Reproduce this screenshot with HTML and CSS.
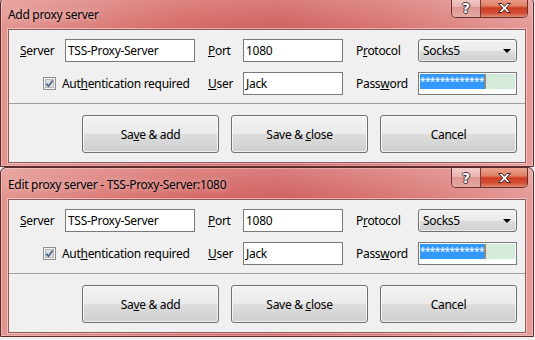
FILE: index.html
```html
<!DOCTYPE html>
<html lang="en">
<head>
  <meta charset="UTF-8">
  <title>Proxy server dialogs</title>
  <link rel="stylesheet" href="styles.css">
</head>
<body>
  <div class="window window-first">
    <div class="titlebar">
      <span class="title">Add proxy server</span>
      <div class="caption-buttons">
        <span class="cap-btn cap-help">?</span>
        <span class="cap-btn cap-close">
          <svg width="15" height="12" viewBox="0 0 15 12"><path d="M1.5 1.5h3.5l2.5 2.8 2.5-2.8h3.5l-4.2 4.5 4.2 4.5h-3.5l-2.5-2.8-2.5 2.8h-3.5l4.2-4.5z" fill="#fff" stroke="#4a2020" stroke-width="1" stroke-linejoin="round"/></svg>
        </span>
      </div>
    </div>
    <div class="client">
      <div class="fields">
        <span class="lbl"><u>S</u>erver</span>
        <div class="textbox">TSS-Proxy-Server</div>
        <span class="lbl lbl-gap"><u>P</u>ort</span>
        <div class="textbox">1080</div>
        <span class="lbl lbl-gap">P<u>r</u>otocol</span>
        <div class="combo">Socks5<span class="combo-arrow"></span></div>

        <div class="check-cell">
          <svg class="checkbox" width="13" height="13" viewBox="0 0 13 13">
            <rect x="0.5" y="0.5" width="12" height="12" fill="#f4f4f4" stroke="#8e8f8f"/>
            <rect x="2.5" y="2.5" width="8" height="8" fill="#dedede" stroke="#b8b8b8"/>
            <path d="M3.3 6.6l2.2 2.6 4.2-5.8" fill="none" stroke="#4c6190" stroke-width="1.7"/>
          </svg>
          <span>Aut<u>h</u>entication required</span>
        </div>
        <span class="lbl lbl-gap"><u>U</u>ser</span>
        <div class="textbox">Jack</div>
        <span class="lbl lbl-gap">Pass<u>w</u>ord</span>
        <div class="textbox password"><div class="pw-line"><span class="pw-sel">*************</span></div></div>
      </div>
      <div class="actions">
        <div class="btn">Sa<u>v</u>e &amp; add</div>
        <div class="btn">Save&nbsp;&amp;&nbsp;<u>c</u>lose</div>
        <div class="btn">Cancel</div>
      </div>
    </div>
  </div>

  <div class="window">
    <div class="titlebar">
      <span class="title">Edit proxy server - TSS-Proxy-Server:1080</span>
      <div class="caption-buttons">
        <span class="cap-btn cap-help">?</span>
        <span class="cap-btn cap-close">
          <svg width="15" height="12" viewBox="0 0 15 12"><path d="M1.5 1.5h3.5l2.5 2.8 2.5-2.8h3.5l-4.2 4.5 4.2 4.5h-3.5l-2.5-2.8-2.5 2.8h-3.5l4.2-4.5z" fill="#fff" stroke="#4a2020" stroke-width="1" stroke-linejoin="round"/></svg>
        </span>
      </div>
    </div>
    <div class="client">
      <div class="fields">
        <span class="lbl"><u>S</u>erver</span>
        <div class="textbox">TSS-Proxy-Server</div>
        <span class="lbl lbl-gap"><u>P</u>ort</span>
        <div class="textbox">1080</div>
        <span class="lbl lbl-gap">P<u>r</u>otocol</span>
        <div class="combo">Socks5<span class="combo-arrow"></span></div>

        <div class="check-cell">
          <svg class="checkbox" width="13" height="13" viewBox="0 0 13 13">
            <rect x="0.5" y="0.5" width="12" height="12" fill="#f4f4f4" stroke="#8e8f8f"/>
            <rect x="2.5" y="2.5" width="8" height="8" fill="#dedede" stroke="#b8b8b8"/>
            <path d="M3.3 6.6l2.2 2.6 4.2-5.8" fill="none" stroke="#4c6190" stroke-width="1.7"/>
          </svg>
          <span>Aut<u>h</u>entication required</span>
        </div>
        <span class="lbl lbl-gap"><u>U</u>ser</span>
        <div class="textbox">Jack</div>
        <span class="lbl lbl-gap">Pass<u>w</u>ord</span>
        <div class="textbox password"><div class="pw-line"><span class="pw-sel">*************</span></div></div>
      </div>
      <div class="actions">
        <div class="btn">Sa<u>v</u>e &amp; add</div>
        <div class="btn">Save&nbsp;&amp;&nbsp;<u>c</u>lose</div>
        <div class="btn">Cancel</div>
      </div>
    </div>
  </div>
</body>
</html>
```

FILE: styles.css
```css
/* Base */
body {
  margin: 0;
  background: #f0f0f0;
  font-family: "Noto Sans", "Open Sans", sans-serif;
  font-size: 12px;
  letter-spacing: -0.3px;
  color: #000;
  overflow: hidden;
}

u {
  text-underline-offset: 1px;
}

/* Window frame (Aero, red tint) */
.window {
  box-sizing: border-box;
  width: 534px;
  height: 170px;
  border: 1px solid #5c2c2c;
  border-radius: 6px 6px 0 0;
  padding: 0 7px 3px 7px;
  background:
    linear-gradient(180deg, rgba(255, 255, 255, 0.18) 0, rgba(255, 255, 255, 0) 30px),
    linear-gradient(90deg, #e4958f 0%, #dd837f 14%, #d66b68 34%, #d06262 52%, #d87572 72%, #e59a97 100%);
  box-shadow: inset 0 0 0 1px rgba(255, 255, 255, 0.3);
}

.window-first {
  margin-top: -3px;
}

.titlebar {
  display: flex;
  justify-content: space-between;
  align-items: flex-start;
  height: 31px;
}

.title {
  margin-top: 9px;
  line-height: 16px;
  text-shadow: 0 0 6px rgba(255, 255, 255, 0.7);
}

.caption-buttons {
  display: flex;
  margin-right: -2px;
  border: 1px solid #6a3030;
  border-top: none;
  border-radius: 0 0 5px 5px;
  overflow: hidden;
}

.cap-btn {
  display: flex;
  align-items: center;
  justify-content: center;
  height: 19px;
}

.cap-help {
  width: 28px;
  border-right: 1px solid #7a3a3a;
  background: linear-gradient(180deg, #f2cecb 0%, #e7b2ae 45%, #dc9792 50%, #e4a9a4 100%);
  color: #fff;
  font-family: "DejaVu Sans", sans-serif;
  font-weight: bold;
  font-size: 14px;
  letter-spacing: 0;
  text-shadow: 1px 0 0 #4a2a2a, -1px 0 0 #4a2a2a, 0 1px 0 #4a2a2a, 0 -1px 0 #4a2a2a;
}

.cap-close {
  width: 46px;
  background: linear-gradient(180deg, #eba592 0%, #df7e64 42%, #cc3d20 52%, #d4503a 80%, #e28b73 100%);
}

/* Client area */
.client {
  border: 1px solid #8a5e5e;
  background: #f0f0f0;
  box-shadow: 0 0 0 1px rgba(255, 235, 235, 0.5);
}

.fields {
  display: grid;
  grid-template-columns: 45px 130px 48px 100px 75px 99px;
  grid-template-rows: 23px 23px;
  row-gap: 10px;
  align-items: center;
  padding: 9px 0 8px 11px;
  border-bottom: 1px solid #a0a0a0;
  white-space: nowrap;
}

.lbl-gap {
  padding-left: 13px;
}

.textbox {
  box-sizing: border-box;
  height: 23px;
  padding: 0 2px;
  border: 1px solid #7a7a7a;
  background: #fff;
  line-height: 21px;
}

.combo {
  box-sizing: border-box;
  position: relative;
  height: 23px;
  padding: 0 4px;
  border: 1px solid #707070;
  border-radius: 3px;
  background: linear-gradient(180deg, #f2f2f2 0%, #ebebeb 50%, #dddddd 51%, #cfcfcf 100%);
  box-shadow: inset 0 0 0 1px rgba(255, 255, 255, 0.6);
  line-height: 21px;
}

.combo-arrow {
  position: absolute;
  right: 5px;
  top: 9px;
  border-left: 4px solid transparent;
  border-right: 4px solid transparent;
  border-top: 4px solid #000;
}

.check-cell {
  grid-column: span 2;
  display: flex;
  align-items: center;
  gap: 6px;
  padding-left: 23px;
}

.checkbox {
  display: block;
  flex: none;
}

.password {
  padding: 1px;
}

.pw-line {
  height: 15px;
  background: #d4ebd9;
  line-height: 15px;
}

.pw-sel {
  display: inline-block;
  height: 15px;
  padding-right: 1px;
  border-right: 1px solid #e07a10;
  background: #3399ff;
  color: #fff;
  font-size: 10px;
  letter-spacing: -0.6px;
  vertical-align: top;
}

/* Buttons */
.actions {
  display: flex;
  justify-content: flex-end;
  gap: 12px;
  padding: 11px 8px 9px 0;
}

.btn {
  box-sizing: border-box;
  width: 137px;
  height: 38px;
  border: 1px solid #707070;
  border-radius: 3px;
  background: linear-gradient(180deg, #f2f2f2 0%, #ebebeb 50%, #dddddd 51%, #cfcfcf 100%);
  box-shadow: inset 0 0 0 1px rgba(255, 255, 255, 0.7);
  display: flex;
  align-items: center;
  justify-content: center;
}
```
